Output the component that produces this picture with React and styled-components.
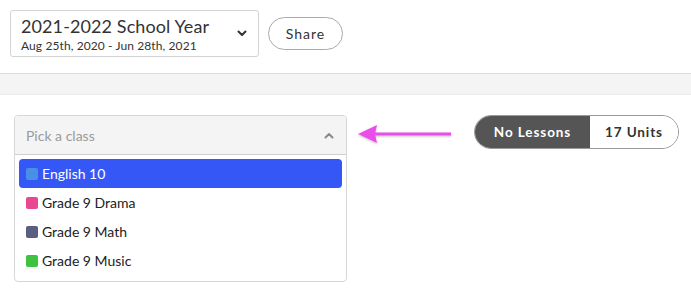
import React from "react";
import styled, { createGlobalStyle } from "styled-components";

const Global = createGlobalStyle`
  html, body { margin: 0; padding: 0; background: #fff; }
  body { font-family: Lato, "Open Sans", Arial, sans-serif; color: #333; }
  * { box-sizing: border-box; }
`;

const Page = styled.div`
  width: 691px;
  height: 294px;
  overflow: hidden;
`;

const TopBar = styled.div`
  display: flex;
  align-items: center;
  gap: 9px;
  padding: 10px 10px 0 10px;
`;

const YearSelect = styled.div`
  width: 249px;
  height: 47px;
  border: 1px solid #d3d3d3;
  border-radius: 3px;
  display: flex;
  align-items: center;
  padding: 0 11px 0 10px;
`;

const YearText = styled.div`
  flex: 1;
  display: flex;
  flex-direction: column;
  gap: 1px;
`;

const YearTitle = styled.div`
  font-size: 18px;
  line-height: 22px;
  color: #333;
  letter-spacing: 0.1px;
`;

const YearDates = styled.div`
  font-size: 12px;
  line-height: 15px;
  color: #333;
  letter-spacing: 0.1px;
`;

const ShareButton = styled.button`
  width: 75px;
  height: 33px;
  border: 1px solid #aaa;
  border-radius: 17px;
  background: #fff;
  font-family: inherit;
  font-size: 14px;
  color: #333;
  letter-spacing: 1px;
  padding: 0;
`;

const Band = styled.div`
  margin-top: 16px;
  height: 22px;
  background: #f4f4f4;
  border-top: 1px solid #dcdcdc;
  border-bottom: 1px solid #ececec;
`;

const Content = styled.div`
  display: flex;
  align-items: flex-start;
  padding: 20px 12px 0 14px;
`;

const Dropdown = styled.div`
  width: 333px;
  height: 167px;
  border: 1px solid #d6d6d6;
  border-radius: 4px;
  overflow: hidden;
`;

const DropHeader = styled.div`
  height: 39px;
  background: #f4f4f4;
  border-bottom: 1px solid #cfcfcf;
  display: flex;
  align-items: center;
  justify-content: space-between;
  padding: 0 12px 0 11px;
  font-size: 14px;
  color: #9a9a9a;
`;

const List = styled.div`
  padding: 4px 4px 6px 4px;
`;

const Item = styled.div`
  height: 29px;
  display: flex;
  align-items: center;
  gap: 4px;
  padding-left: 7px;
  border-radius: 4px;
  font-size: 14px;
  background: ${(p) => (p.$active ? "#3557f5" : "transparent")};
  color: ${(p) => (p.$active ? "#fff" : "#222")};
`;

const Swatch = styled.span`
  width: 12px;
  height: 12px;
  border-radius: 2px;
  background: ${(p) => p.$color};
`;

const Arrow = styled.svg`
  margin: 8px 0 0 10px;
  flex: none;
`;

const Toggle = styled.div`
  margin-left: auto;
  display: flex;
  height: 34px;
  border: 1px solid #9a9a9a;
  border-radius: 17px;
  overflow: hidden;
`;

const ToggleSeg = styled.div`
  width: ${(p) => p.$w}px;
  display: flex;
  align-items: center;
  justify-content: center;
  font-size: 13.5px;
  font-weight: 700;
  letter-spacing: 0.9px;
  background: ${(p) => (p.$on ? "#555" : "#fff")};
  color: ${(p) => (p.$on ? "#fff" : "#333")};
`;

const classes = [
  { name: "English 10", color: "#4a8fe6", active: true },
  { name: "Grade 9 Drama", color: "#e8488f" },
  { name: "Grade 9 Math", color: "#5a5f82" },
  { name: "Grade 9 Music", color: "#3fc23f" },
];

export default function App() {
  return (
    <Page>
      <Global />
      <TopBar>
        <YearSelect>
          <YearText>
            <YearTitle>2021-2022 School Year</YearTitle>
            <YearDates>Aug 25th, 2020 - Jun 28th, 2021</YearDates>
          </YearText>
          <svg width="10" height="7" viewBox="0 0 10 7">
            <path d="M1.5 1.5 L5 5 L8.5 1.5" fill="none" stroke="#333" strokeWidth="2" strokeLinecap="round" strokeLinejoin="round" />
          </svg>
        </YearSelect>
        <ShareButton>Share</ShareButton>
      </TopBar>
      <Band />
      <Content>
        <Dropdown>
          <DropHeader>
            <span>Pick a class</span>
            <svg width="10" height="7" viewBox="0 0 10 7">
              <path d="M1.5 5.5 L5 2 L8.5 5.5" fill="none" stroke="#8a8a8a" strokeWidth="2" strokeLinecap="round" strokeLinejoin="round" />
            </svg>
          </DropHeader>
          <List>
            {classes.map((c) => (
              <Item key={c.name} $active={c.active}>
                <Swatch $color={c.color} />
                {c.name}
              </Item>
            ))}
          </List>
        </Dropdown>
        <Arrow width="96" height="24" viewBox="0 0 96 24">
          <defs>
            <filter id="sh" x="-10%" y="-50%" width="120%" height="200%">
              <feDropShadow dx="0" dy="1" stdDeviation="1" floodColor="#000" floodOpacity="0.25" />
            </filter>
          </defs>
          <g filter="url(#sh)">
            <line x1="18" y1="11" x2="94" y2="11" stroke="#ea4de9" strokeWidth="3" />
            <polygon points="1,11 20,2 18,11 20,20" fill="#ea4de9" />
          </g>
        </Arrow>
        <Toggle>
          <ToggleSeg $on $w={115}>No Lessons</ToggleSeg>
          <ToggleSeg $w={88}>17 Units</ToggleSeg>
        </Toggle>
      </Content>
    </Page>
  );
}
